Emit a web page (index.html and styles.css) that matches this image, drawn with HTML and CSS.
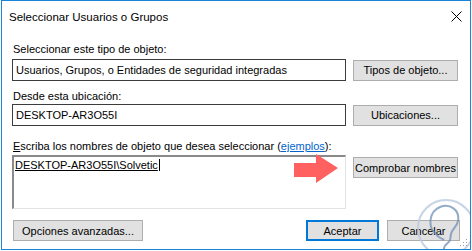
FILE: index.html
```html
<!DOCTYPE html>
<html>

<head>
    <meta charset="UTF-8" />
    <title>Seleccionar Usuarios o Grupos</title>
    <link rel="stylesheet" href="styles.css">
</head>

<body>
    <div class="window">
        <div class="titlebar">
            <span class="title">Seleccionar Usuarios o Grupos</span>
            <svg class="close" width="11" height="11" viewBox="0 0 11 11">
                <path d="M0.5 0.5 L10.5 10.5 M10.5 0.5 L0.5 10.5" stroke="#000" stroke-width="1" />
            </svg>
        </div>
        <div class="content">
            <div class="label first">Seleccionar este tipo de objeto:</div>
            <div class="row">
                <div class="field">Usuarios, Grupos, o Entidades de seguridad integradas</div>
                <button class="btn">Tipos de objeto...</button>
            </div>
            <div class="label second">Desde esta ubicación:</div>
            <div class="row">
                <div class="field">DESKTOP-AR3O55I</div>
                <button class="btn">Ubicaciones...</button>
            </div>
            <div class="label third"><u>E</u>scriba los nombres de objeto que desea seleccionar (<a href="#">ejemplos</a>):</div>
            <div class="row top">
                <div class="names"><span class="resolved">DESKTOP-AR3O55I\Solvetic</span></div>
                <button class="btn check">Comprobar nombres</button>
            </div>
            <div class="footer">
                <button class="btn wide">Opciones avanzadas...</button>
                <div class="actions">
                    <button class="btn default">Aceptar</button>
                    <button class="btn">Cancelar</button>
                </div>
            </div>
        </div>

        <svg class="arrow" width="44" height="30" viewBox="0 0 44 30">
            <polygon points="0,9 22,9 22,0 44,14 22,29 22,23 0,23" fill="#ff6161" />
        </svg>

        <svg class="watermark" width="60" height="60" viewBox="0 0 60 60">
            <circle cx="32" cy="34" r="28" fill="none" stroke="#b8c9de" stroke-width="2" opacity="0.8" />
            <path d="M22 40 C14 34 14 18 26 13 C36 9 46 16 44 27 C43 33 38 35 37 40 L36 46 C35 50 30 50 30 54 C30 57 34 58 38 57"
                fill="none" stroke="#6f8fb7" stroke-width="2" opacity="0.75" />
            <path d="M22 40 C24 44 28 44 30 46" fill="none" stroke="#6f8fb7" stroke-width="2" opacity="0.75" />
        </svg>

        <svg class="grip" width="8" height="8" viewBox="0 0 8 8">
            <rect x="6" y="0" width="1" height="1" fill="#999" />
            <rect x="3" y="3" width="1" height="1" fill="#999" />
            <rect x="6" y="3" width="1" height="1" fill="#999" />
            <rect x="0" y="6" width="1" height="1" fill="#999" />
            <rect x="3" y="6" width="1" height="1" fill="#999" />
            <rect x="6" y="6" width="1" height="1" fill="#999" />
        </svg>
    </div>
</body>

</html>
```

FILE: styles.css
```css
body {
    margin: 0;
    background: #ffffff;
    font-family: "Liberation Sans", Arial, sans-serif;
    font-size: 11px;
    color: #000000;
}

.window {
    position: relative;
    box-sizing: border-box;
    width: 470px;
    height: 250px;
    margin-left: 1px;
    border: 1px solid #1883d7;
    background: #ffffff;
    overflow: hidden;
}

.titlebar {
    display: flex;
    justify-content: space-between;
    align-items: flex-start;
    height: 29px;
    padding: 9px 8px 0 7px;
    box-sizing: border-box;
    line-height: 14px;
    font-size: 11.5px;
}

.close {
    margin-top: 1px;
}

.content {
    padding: 0 10px 0 10px;
}

.label {
    line-height: 14px;
    margin: 8px 0 3px 1px;
}

.label.first {
    margin-top: 12px;
}

.label.second {
    margin-bottom: 1px;
}

.label.third {
    margin-top: 13px;
    margin-bottom: 2px;
}

.label a {
    color: #0066cc;
}

.row {
    display: flex;
    align-items: center;
    gap: 7px;
}

.row.top {
    align-items: flex-start;
}

.field {
    box-sizing: border-box;
    width: 334px;
    height: 22px;
    border: 1px solid #3c3c3c;
    padding: 0 3px;
    line-height: 20px;
    white-space: nowrap;
    overflow: hidden;
}

.names {
    box-sizing: border-box;
    width: 334px;
    height: 54px;
    border-top: 2px solid #8a8a8a;
    border-left: 2px solid #8a8a8a;
    border-right: 1px solid #e3e3e3;
    border-bottom: 1px solid #e3e3e3;
    padding: 1px 0 0 1px;
    line-height: 14px;
}

.resolved {
    text-decoration: underline;
    border-right: 1px solid #000;
    padding-right: 1px;
}

.btn {
    box-sizing: border-box;
    width: 105px;
    height: 21px;
    padding: 0;
    border: 1px solid #adadad;
    background: #e1e1e1;
    font-family: "Liberation Sans", Arial, sans-serif;
    font-size: 11px;
    color: #000000;
    white-space: nowrap;
}

.btn.check {
    margin-top: 2px;
}

.btn.wide {
    width: 130px;
    margin-left: 1px;
}

.btn.default {
    border: 2px solid #0078d7;
}

.footer {
    display: flex;
    justify-content: space-between;
    margin-top: 11px;
}

.actions {
    display: flex;
    gap: 8px;
}

.actions .btn {
    width: 73px;
}

.arrow {
    position: absolute;
    left: 292px;
    top: 153px;
}

.watermark {
    position: absolute;
    left: 412px;
    top: 193px;
}

.grip {
    position: absolute;
    right: 2px;
    bottom: 2px;
}
```
